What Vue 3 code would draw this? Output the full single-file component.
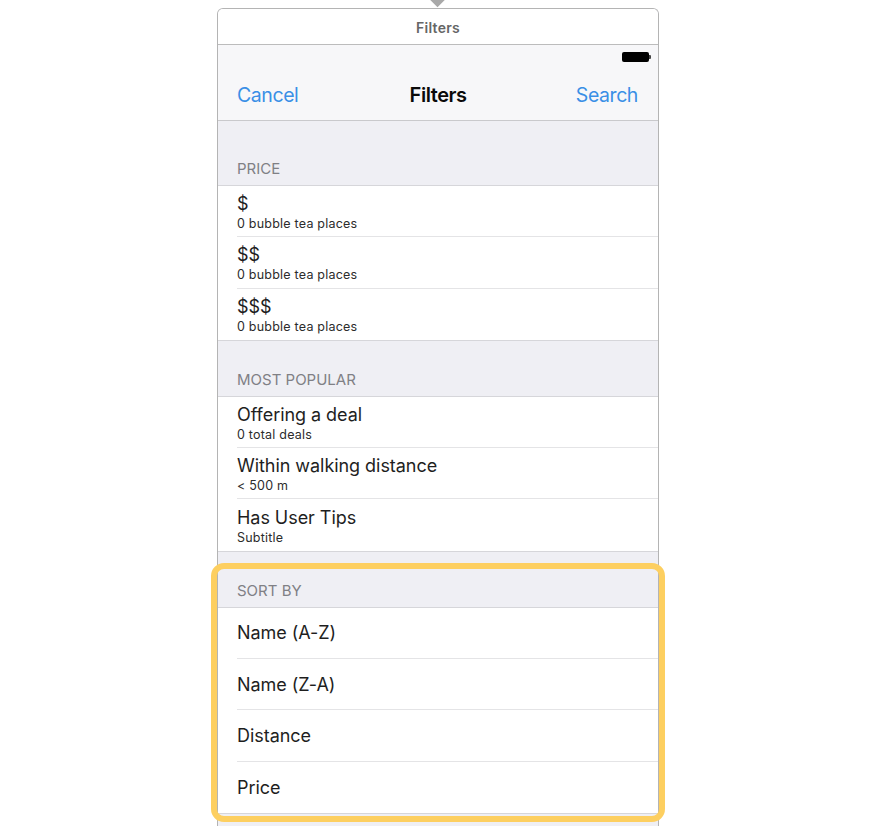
<template>
  <div class="page">
    <span class="pointer" />
    <div class="window">
      <div class="title-bar">Filters</div>
      <div class="nav-bar">
        <div class="status-row">
          <span class="battery" />
        </div>
        <div class="nav-row">
          <span class="nav-btn">Cancel</span>
          <span class="nav-title">Filters</span>
          <span class="nav-btn">Search</span>
        </div>
      </div>

      <section v-for="section in sections" :key="section.title" :class="['section', section.cls]">
        <div class="section-head">{{ section.title }}</div>
        <ul class="rows">
          <li v-for="row in section.rows" :key="row.title" :class="['row', { plain: !row.sub }]">
            <div class="row-inner">
              <span class="row-title">{{ row.title }}</span>
              <span v-if="row.sub" class="row-sub">{{ row.sub }}</span>
            </div>
          </li>
        </ul>
      </section>
      <div class="tail" />
      <div class="highlight" />
    </div>
  </div>
</template>

<script setup>
const sections = [
  {
    title: 'PRICE',
    cls: 'first',
    rows: [
      { title: '$', sub: '0 bubble tea places' },
      { title: '$$', sub: '0 bubble tea places' },
      { title: '$$$', sub: '0 bubble tea places' },
    ],
  },
  {
    title: 'MOST POPULAR',
    cls: '',
    rows: [
      { title: 'Offering a deal', sub: '0 total deals' },
      { title: 'Within walking distance', sub: '< 500 m' },
      { title: 'Has User Tips', sub: 'Subtitle' },
    ],
  },
  {
    title: 'SORT BY',
    cls: '',
    rows: [
      { title: 'Name (A-Z)' },
      { title: 'Name (Z-A)' },
      { title: 'Distance' },
      { title: 'Price' },
    ],
  },
]
</script>

<style scoped>
.page {
  width: 872px;
  height: 826px;
  overflow: hidden;
  background: #ffffff;
  font-family: Inter, "Liberation Sans", sans-serif;
  display: flex;
  flex-direction: column;
  align-items: center;
  position: relative;
  color: #1c1c1e;
}

.pointer {
  position: absolute;
  left: 432px;
  top: -6px;
  width: 11px;
  height: 11px;
  background: #a9a9a9;
  transform: rotate(45deg);
}

.window {
  margin-top: 8px;
  margin-left: 4px;
  width: 442px;
  height: 830px;
  box-sizing: border-box;
  border: 1px solid #b4b4b4;
  border-bottom: none;
  border-radius: 6px 6px 0 0;
  position: relative;
  background: #efeff4;
}

.title-bar {
  height: 36px;
  box-sizing: border-box;
  padding-top: 2px;
  border-bottom: 1px solid #bcbcbc;
  border-radius: 5px 5px 0 0;
  background: #ffffff;
  display: flex;
  align-items: center;
  justify-content: center;
  font-size: 14px;
  font-weight: 600;
  color: #666666;
  letter-spacing: 0.25px;
}

.nav-bar {
  height: 76px;
  box-sizing: border-box;
  background: #f7f7f9;
  border-bottom: 1px solid #c9c9cc;
}

.status-row {
  height: 25px;
  display: flex;
  justify-content: flex-end;
  align-items: center;
  padding-right: 9px;
}

.battery {
  width: 27px;
  height: 10px;
  margin-top: -1px;
  background: #000000;
  border-radius: 2px;
  position: relative;
}

.battery::after {
  content: "";
  position: absolute;
  right: -2px;
  top: 3px;
  width: 2px;
  height: 4px;
  background: #444444;
  border-radius: 0 1px 1px 0;
}

.nav-row {
  display: flex;
  align-items: center;
  justify-content: space-between;
  padding: 0 20px 0 19px;
  height: 50px;
}

.nav-btn {
  font-size: 19.5px;
  color: #3a8fe6;
  letter-spacing: -0.43px;
}

.nav-title {
  font-size: 20px;
  font-weight: 600;
  color: #0a0a0a;
  letter-spacing: -0.45px;
  margin-left: 2px;
}

.section-head {
  height: 56px;
  box-sizing: border-box;
  padding: 0 0 7px 19px;
  display: flex;
  align-items: flex-end;
  font-size: 15px;
  line-height: 18px;
  color: #808085;
  border-bottom: 1px solid #d6d6da;
}

.section.first .section-head {
  height: 65px;
}

.rows {
  list-style: none;
  margin: 0;
  padding: 0;
  background: #ffffff;
  border-bottom: 1px solid #d6d6da;
}

.row {
  height: 51.3px;
  box-sizing: border-box;
  padding-left: 19px;
}

.row-inner {
  height: 100%;
  box-sizing: border-box;
  padding-top: 4px;
  border-bottom: 1px solid #e4e4e6;
  display: flex;
  flex-direction: column;
  justify-content: center;
}

.row.plain .row-inner {
  padding-top: 1px;
}

.row:last-child .row-inner {
  border-bottom: none;
}

.row-title {
  font-size: 18px;
  line-height: 22px;
  color: #1e1e1e;
  letter-spacing: -0.05px;
}

.row-sub {
  font-size: 12.5px;
  line-height: 18px;
  color: #2c2c2c;
  letter-spacing: 0.22px;
}

.tail {
  height: 20px;
}

.highlight {
  position: absolute;
  left: -7px;
  top: 554px;
  width: 454px;
  height: 259px;
  box-sizing: border-box;
  border: 6px solid #fdcf60;
  border-radius: 13px;
}
</style>

<style>
html,
body {
  margin: 0;
  background: #ffffff;
}
</style>
